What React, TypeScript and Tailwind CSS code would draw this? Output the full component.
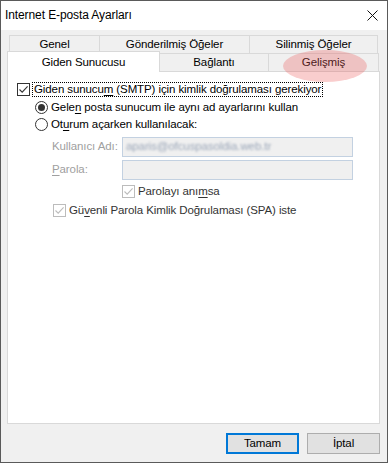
import React from "react";

const FONT = "font-['Liberation_Sans',Arial,sans-serif]";

function Check({ checked, disabled }: { checked?: boolean; disabled?: boolean }) {
  const c = disabled ? "#bcbcbc" : "#333333";
  return (
    <span
      className={`flex h-[13px] w-[13px] shrink-0 items-center justify-center border bg-white ${
        disabled ? "border-[#bcbcbc]" : "border-[#333333]"
      }`}
    >
      {checked && (
        <svg width="11" height="11" viewBox="0 0 11 11">
          <path d="M1.5 5.5 L4.2 8.2 L9.6 2.4" fill="none" stroke={c} strokeWidth="1.1" />
        </svg>
      )}
    </span>
  );
}

function Radio({ checked }: { checked?: boolean }) {
  return (
    <span className="flex h-[13px] w-[13px] shrink-0 items-center justify-center rounded-full border border-[#333333] bg-white">
      {checked && <span className="h-[7px] w-[7px] rounded-full bg-[#333333]" />}
    </span>
  );
}

export default function App() {
  return (
    <div
      className={`relative flex h-[463px] w-[388px] flex-col border border-[#5a5a5a] bg-[#f0f0f0] text-[11.5px] leading-none tracking-[-0.1px] text-black ${FONT}`}
    >
      {/* title bar */}
      <div className="flex h-[29px] shrink-0 items-center justify-between bg-white pl-[4px] pr-[9px]">
        <span className="pb-[1px] text-[12px] tracking-[-0.1px]">Internet E-posta Ayarları</span>
        <svg width="11" height="11" viewBox="0 0 11 11" className="mb-[1px]">
          <path d="M0.5 0.5 L10.5 10.5 M10.5 0.5 L0.5 10.5" stroke="#111" strokeWidth="1" />
        </svg>
      </div>

      <div className="flex flex-1 flex-col pl-[6px] pr-[7px] pt-[5px]">
        {/* back tab row */}
        <div className="ml-[2px] flex h-[18px] shrink-0">
          <div className="flex w-[90px] items-center justify-center border-l border-t border-[#d9d9d9] pt-[1px]">Genel</div>
          <div className="flex w-[150px] items-center justify-center border-l border-t border-[#d9d9d9] pt-[1px]">
            Gönderilmiş Öğeler
          </div>
          <div className="flex w-[129px] items-center justify-center border-l border-r border-t border-[#d9d9d9] pt-[1px]">
            Silinmiş Öğeler
          </div>
        </div>

        {/* front tab row */}
        <div className="relative z-10 -mb-[1px] -mt-[2px] flex h-[21px] shrink-0 items-end">
          <div className="flex h-[21px] w-[153px] items-start justify-center border-l border-r border-t border-[#d9d9d9] bg-white pt-[5px]">
            Giden Sunucusu
          </div>
          <div className="flex h-[19px] w-[109px] items-center justify-center border-b border-r border-t border-[#d9d9d9] pt-[1px]">
            Bağlantı
          </div>
          <div className="flex h-[19px] w-[110px] items-center justify-center border-b border-r border-t border-[#d9d9d9] pt-[1px]">
            Gelişmiş
          </div>
        </div>

        {/* panel */}
        <div className="flex h-[353px] shrink-0 flex-col border border-[#d9d9d9] bg-white pt-[10px]">
          <div className="flex h-[15px] items-center">
            <span className="ml-[9px]">
              <Check checked />
            </span>
            <span className="ml-[2px] block h-[15px] whitespace-nowrap border border-dotted border-black px-[1px] pt-[1px]">
              Giden sunucu<u className="underline-offset-2">m</u> (SMTP) için kimlik doğrulaması gerekiyor
            </span>
          </div>

          <div className="mt-[3px] flex h-[15px] items-center">
            <span className="ml-[27px]">
              <Radio checked />
            </span>
            <span className="ml-[3px] whitespace-nowrap">
              Gele<u className="underline-offset-2">n</u> posta sunucum ile aynı ad ayarlarını kullan
            </span>
          </div>

          <div className="mt-[2px] flex h-[15px] items-center">
            <span className="ml-[27px]">
              <Radio />
            </span>
            <span className="ml-[3px] whitespace-nowrap">
              Ot<u className="underline-offset-2">u</u>rum açarken kullanılacak:
            </span>
          </div>

          <div className="mt-[5px] flex h-[20px] items-center">
            <span className="ml-[44px] w-[70px] whitespace-nowrap text-[#a0a0a0]">Kullanıcı Adı:</span>
            <div className="flex h-[20px] w-[231px] items-center overflow-hidden border border-[#c3d1e1] bg-[#f0f0f0] pl-[3px]">
              <span className="whitespace-nowrap text-[#9aa6b8] blur-[1.2px]">aparis@ofcuspasoldia.web.tr</span>
            </div>
          </div>

          <div className="mt-[3px] flex h-[20px] items-center">
            <span className="ml-[44px] w-[70px] text-[#a0a0a0]">
              <u className="underline-offset-2">P</u>arola:
            </span>
            <div className="h-[20px] w-[231px] border border-[#c3d1e1] bg-[#f0f0f0]" />
          </div>

          <div className="mt-[4px] flex h-[15px] items-center">
            <span className="ml-[114px]">
              <Check checked disabled />
            </span>
            <span className="ml-[3px] whitespace-nowrap text-[#333]">
              Parolayı anı<u className="underline-offset-2">m</u>sa
            </span>
          </div>

          <div className="mt-[4px] flex h-[15px] items-center">
            <span className="ml-[45px]">
              <Check checked disabled />
            </span>
            <span className="ml-[3px] whitespace-nowrap text-[#333]">
              Gü<u className="underline-offset-2">v</u>enli Parola Kimlik Doğrulaması (SPA) iste
            </span>
          </div>
        </div>

        {/* buttons */}
        <div className="mt-[9px] flex justify-end gap-[8px]">
          <button className="flex h-[21px] w-[73px] items-center justify-center border-2 border-[#0078d7] bg-[#e1e1e1]">
            Tamam
          </button>
          <button className="flex h-[21px] w-[73px] items-center justify-center border border-[#adadad] bg-[#e1e1e1]">
            İptal
          </button>
        </div>
      </div>

      {/* highlight drawn over the Gelişmiş tab */}
      <div className="pointer-events-none absolute left-[282px] top-[49px] z-20 h-[32px] w-[84px] rounded-[50%] bg-[rgba(235,90,90,0.3)]" />
    </div>
  );
}
